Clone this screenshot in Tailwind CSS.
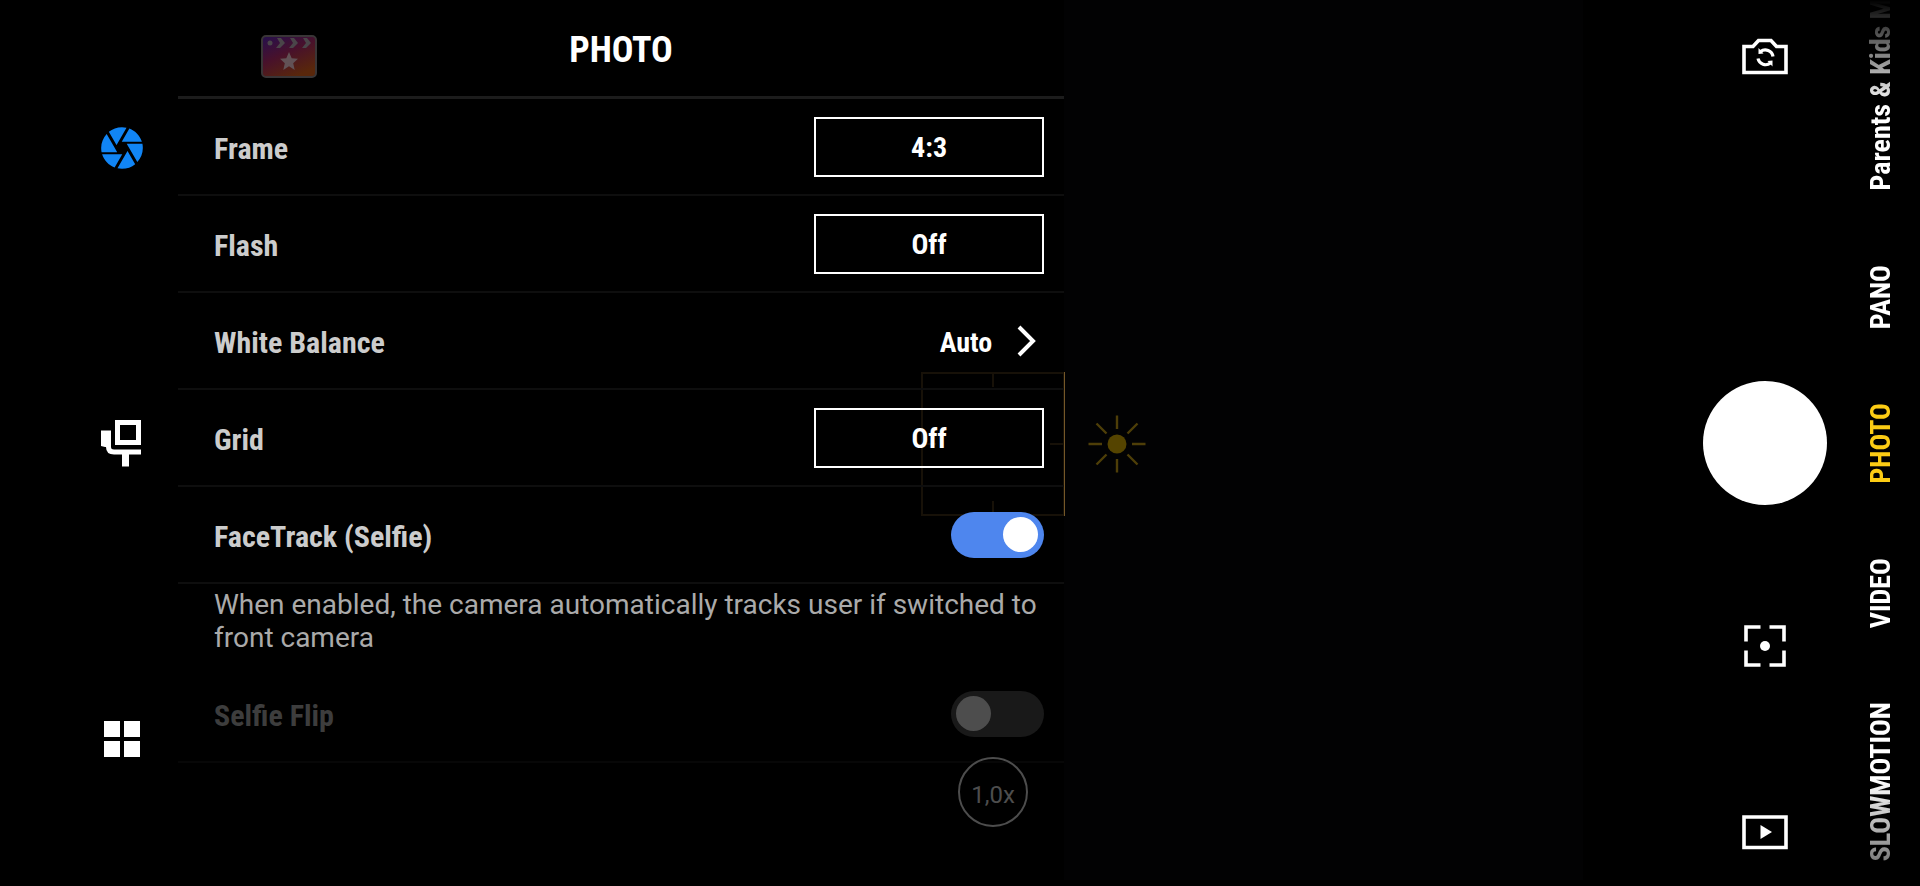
<!DOCTYPE html>
<html lang="en">
<head>
<meta charset="utf-8">
<meta name="viewport" content="width=device-width, initial-scale=1">
<title>Camera – Photo settings</title>
<script src="https://cdn.jsdelivr.net/npm/@tailwindcss/browser@4"></script>
</head>
<body class="bg-black font-['Roboto_Condensed','Liberation_Sans_Narrow',Roboto,sans-serif] font-bold text-white">
<main class="relative flex h-screen overflow-hidden">

  <!-- Live preview overlays, dimmed beneath the settings panel -->
  <div class="absolute inset-y-0 right-[337px] left-[403px] mb-[6px] bg-[#020203]" aria-hidden="true">
    <svg class="absolute top-1/2 left-1/2 mt-1 h-[144px] w-[144px] -translate-x-1/2 -translate-y-1/2" viewBox="0 0 144 144" fill="none" stroke="#745728" stroke-width="2"><path d="M1 1H143V143H1ZM72 1V15M72 143V129M1 72H15M143 72H129"/></svg>
    <svg class="absolute top-1/2 left-1/2 mt-1 ml-[94px] h-[60px] w-[60px] -translate-y-1/2" viewBox="0 0 60 60" stroke="#4e3e08" stroke-width="2.4"><circle cx="30" cy="30" r="9.5" fill="#554400" stroke="none"/><path d="M30 1.500V15M30 45V58.500M1.500 30H15M45 30H58.500M9.500 9.500L19.500 19.500M40.500 40.500L50.500 50.500M9.500 50.500L19.500 40.500M40.500 19.500L50.500 9.500"/></svg>
  </div>

  <nav class="relative flex w-[178px] shrink-0 flex-col items-center justify-around pl-[66px]" aria-label="Settings sections">
    <button aria-label="Photo"><svg class="size-[50px]" viewBox="0 0 24 24" fill="#1185f5"><path d="M9.400 10.500l4.770-8.260C13.470 2.090 12.750 2 12 2c-2.400 0-4.600.850-6.320 2.250l3.660 6.350.060-.100zM21.540 9c-.920-2.920-3.150-5.260-6-6.340L11.880 9h9.660zm.260 1h-7.490l.290.500 4.760 8.250C21 16.970 22 14.610 22 12c0-.690-.070-1.350-.200-2zM8.540 12l-3.900-6.750C3.010 7.030 2 9.390 2 12c0 .690.070 1.350.200 2h7.490l-1.150-2zm-6.080 3c.920 2.920 3.150 5.260 6 6.340L12.120 15H2.460zm11.270 0l-3.900 6.760c.700.150 1.420.240 2.170.240 2.400 0 4.600-.850 6.320-2.250l-3.660-6.350-.930 1.600z"/></svg></button>
    <button aria-label="Gimbal"><svg class="size-[50px]" viewBox="0 0 50 50" fill="none" stroke="#fff"><path d="M20.500 4.500H41.500V24.500H20.500Z" stroke-width="5"/><path d="M4 12.500H14V29H8L4 28Z" fill="#fff" stroke="none"/><path d="M11.500 27V29Q11.500 34 17 34H44" stroke-width="5"/><path d="M28.500 34V48.500" stroke-width="7"/></svg></button>
    <button aria-label="General"><svg class="size-[50px]" viewBox="0 0 50 50" fill="#fff"><path d="M7 8H23V24H7ZM27 8H43V24H27ZM7 28H23V44H7ZM27 28H43V44H27Z"/></svg></button>
  </nav>

  <section class="relative flex w-[46.15%] shrink-0 flex-col bg-black/80" aria-label="Photo settings">
    <header class="relative flex h-[99px] shrink-0 items-center justify-center border-b-[3px] border-[#1c1c1c] pt-1">
      <svg class="absolute top-[34px] left-[82px] h-[45px] w-[58px]" viewBox="0 0 58 45" aria-hidden="true">
        <defs><linearGradient id="clap" x1="0" y1="0" x2="0.6" y2="1"><stop offset="0" stop-color="#25104e"/><stop offset=".5" stop-color="#48112b"/><stop offset="1" stop-color="#59270b"/></linearGradient></defs>
        <rect x="2" y="2" width="54" height="41" rx="4" fill="url(#clap)" stroke="#393536" stroke-width="2"/>
        <g fill="#4a4549"><circle cx="10" cy="9" r="2.500"/><path d="M17 4H21L25 9L20 14H16L20 9ZM30 4H34L38 9L33 14H29L33 9ZM43 4H47L51 9L46 14H42L46 9Z"/><path d="M29 18L31.700 24.300L38 24.800L33.200 29.200L34.700 36L29 32.300L23.300 36L24.800 29.200L20 24.800L26.300 24.300Z" fill="#625256"/></g>
      </svg>
      <h1 class="text-4xl">PHOTO</h1>
    </header>

    <div class="flex h-[97px] shrink-0 items-center justify-between border-b-2 border-[#0e0e0e] pr-5 pl-9">
      <span id="frame" class="pt-1 text-3xl text-[#ccc]">Frame</span>
      <button class="h-[60px] w-[230px] border-2 border-white pt-[2px] text-[28px]" aria-labelledby="frame">4:3</button>
    </div>
    <div class="flex h-[97px] shrink-0 items-center justify-between border-b-2 border-[#0e0e0e] pr-5 pl-9">
      <span id="flash" class="pt-1 text-3xl text-[#ccc]">Flash</span>
      <button class="h-[60px] w-[230px] border-2 border-white pt-[2px] text-[28px]" aria-labelledby="flash">Off</button>
    </div>
    <div class="flex h-[97px] shrink-0 items-center justify-between border-b-2 border-[#0e0e0e] pr-5 pl-9">
      <span id="wb" class="pt-1 text-3xl text-[#ccc]">White Balance</span>
      <button class="flex items-center gap-6 pr-[6px] text-[28px]" aria-labelledby="wb"><span class="pt-1">Auto</span>
        <svg class="h-8 w-[22px]" viewBox="0 0 22 32" fill="none" stroke="#fff" stroke-width="4"><path d="M3 2L17 16L3 30"/></svg>
      </button>
    </div>
    <div class="flex h-[97px] shrink-0 items-center justify-between border-b-2 border-[#0e0e0e] pr-5 pl-9">
      <span id="grid" class="pt-1 text-3xl text-[#ccc]">Grid</span>
      <button class="h-[60px] w-[230px] border-2 border-white pt-[2px] text-[28px]" aria-labelledby="grid">Off</button>
    </div>
    <div class="flex h-[97px] shrink-0 items-center justify-between border-b-2 border-[#0e0e0e] pr-5 pl-9">
      <label for="facetrack" class="pt-1 text-3xl text-[#ccc]">FaceTrack (Selfie)</label>
      <input id="facetrack" type="checkbox" role="switch" checked class="h-[46px] w-[93px] appearance-none rounded-full bg-[#4e86ee] before:mt-[5px] before:ml-[52px] before:block before:size-[35px] before:rounded-full before:bg-white">
    </div>
    <p class="h-[82px] shrink-0 pt-1 pr-4 pl-9 font-[Roboto,sans-serif] text-[28px] leading-[33px] font-normal text-[#aaa]">When enabled, the camera automatically tracks user if switched to front camera</p>
    <div class="flex h-[97px] shrink-0 items-center justify-between border-b-2 border-[#070707] pr-5 pl-9">
      <label for="flip" class="pt-1 text-3xl text-[#3d3d3d]">Selfie Flip</label>
      <input id="flip" type="checkbox" role="switch" disabled class="h-[46px] w-[93px] appearance-none rounded-full bg-[#191919] before:mt-[5px] before:ml-[5px] before:block before:size-[35px] before:rounded-full before:bg-[#4d4d4d]">
    </div>
    <button class="absolute right-9 bottom-[59px] size-[70px] rounded-full border-2 border-[#4d4d4d] pt-[6px] font-[Roboto,sans-serif] text-2xl font-normal text-[#4d4d4d]">1,0x</button>
  </section>

  <section class="relative ml-auto grid w-[124px] shrink-0 grid-rows-[minmax(0,1fr)_auto_minmax(0,1fr)]" aria-label="Capture">
    <div class="flex flex-col items-center pt-[31px]"><button aria-label="Switch camera"><svg class="size-[50px]" viewBox="0 0 50 50" fill="none" stroke="#fff" stroke-width="3.600"><path d="M4 15.500H13L18.500 9.500H31L36.500 15.500H46V41.500H4Z"/><path d="M20.500 20.500A7.800 7.800 0 0 1 33 25.500M30.500 32A7.800 7.800 0 0 1 18 27.500" stroke-width="3.200"/><path d="M18.500 17V23L23.500 22.500ZM32.500 35.500V29.500L27.500 30Z" fill="#fff" stroke="none"/></svg></button></div>
    <button class="size-[124px] rounded-full bg-white" aria-label="Take photo"></button>
    <div class="flex flex-col items-center justify-between pt-[116px] pb-[29px]">
      <button aria-label="Focus"><svg class="size-[50px]" viewBox="0 0 50 50" fill="none" stroke="#fff" stroke-width="3.600"><path d="M20.500 6H6V20.500M29.500 6H44V20.500M6 29.500V44H20.500M44 29.500V44H29.500"/><circle cx="25" cy="25" r="5" fill="#fff" stroke="none"/></svg></button>
      <button aria-label="Gallery"><svg class="size-[50px]" viewBox="0 0 50 50" fill="none" stroke="#fff" stroke-width="3.600"><path d="M4 10H46V40.500H4Z"/><path d="M20.500 18L32 25L20.500 32Z" fill="#fff" stroke="none"/></svg></button>
    </div>
  </section>

  <nav class="relative ml-[37px] flex w-14 shrink-0 flex-col items-start justify-end gap-[74px] overflow-hidden mask-t-from-88% mask-b-from-88% mask-b-to-[106%] pb-[25px] text-[28px] leading-[34px] whitespace-nowrap" aria-label="Modes">
    <button class="rotate-180 [writing-mode:vertical-rl]">Parents &amp; Kids M</button>
    <button class="rotate-180 [writing-mode:vertical-rl]">PANO</button>
    <button class="rotate-180 text-[#fccc14] [writing-mode:vertical-rl]" aria-current="true">PHOTO</button>
    <button class="rotate-180 [writing-mode:vertical-rl]">VIDEO</button>
    <button class="rotate-180 [writing-mode:vertical-rl]">SLOWMOTION</button>
  </nav>
</main>
</body>
</html>
